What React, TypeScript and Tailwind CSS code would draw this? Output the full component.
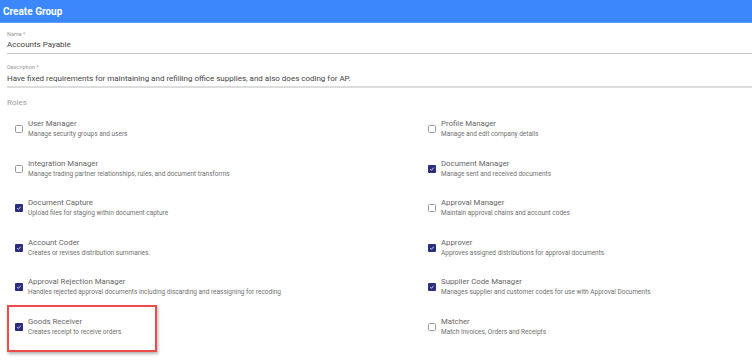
import React from 'react'

type Role = { title: string; desc: string; checked: boolean; mark?: boolean }

const roles: Role[] = [
  { title: 'User Manager', desc: 'Manage security groups and users', checked: false },
  { title: 'Profile Manager', desc: 'Manage and edit company details', checked: false },
  { title: 'Integration Manager', desc: 'Manage trading partner relationships, rules, and document transforms', checked: false },
  { title: 'Document Manager', desc: 'Manage sent and received documents', checked: true },
  { title: 'Document Capture', desc: 'Upload files for staging within document capture', checked: true },
  { title: 'Approval Manager', desc: 'Maintain approval chains and account codes', checked: false },
  { title: 'Account Coder', desc: 'Creates or revises distribution summaries.', checked: true },
  { title: 'Approver', desc: 'Approves assigned distributions for approval documents', checked: true },
  { title: 'Approval Rejection Manager', desc: 'Handles rejected approval documents including discarding and reassigning for recoding', checked: true },
  { title: 'Supplier Code Manager', desc: 'Manages supplier and customer codes for use with Approval Documents', checked: true },
  { title: 'Goods Receiver', desc: 'Creates receipt to receive orders', checked: true, mark: true },
  { title: 'Matcher', desc: 'Match Invoices, Orders and Receipts', checked: false },
]

const Checkbox = ({ checked }: { checked: boolean }) =>
  checked ? (
    <div className="mt-[6px] flex h-[8px] w-[8px] shrink-0 items-center justify-center rounded-[1px] bg-[#2d2d7f]">
      <svg width="6" height="6" viewBox="0 0 10 10">
        <path d="M2 5.2l2 2 4-4.4" fill="none" stroke="white" strokeWidth="1.3" />
      </svg>
    </div>
  ) : (
    <div className="mt-[6px] h-[8px] w-[8px] shrink-0 rounded-[1.5px] border border-[#9a9a9a]" />
  )

const RoleItem = ({ role }: { role: Role }) => (
  <div className="relative flex h-[39.5px] items-start gap-[5px]">
    <Checkbox checked={role.checked} />
    <div>
      <div className="text-[7.8px] leading-[10px] text-[#666]">{role.title}</div>
      <div className="mt-[1px] text-[6.5px] leading-[8px] text-[#707070]">{role.desc}</div>
    </div>
    {role.mark && (
      <div className="absolute left-[-8px] top-[-11.5px] h-[47px] w-[150px] border-2 border-[#f04a4a] shadow-[1px_2px_3px_rgba(0,0,0,0.3)]" />
    )}
  </div>
)

export default function App() {
  return (
    <div className="h-[361px] w-[752px] overflow-hidden bg-white font-['Roboto',sans-serif]">
      <div className="flex h-[23px] items-center border-b border-[#5c9dff] bg-[#3b88fd] pl-[3px]">
        <span className="text-[10px] font-bold text-white">Create Group</span>
      </div>
      <div className="pl-[7px]">
        <div className="border-b border-[#c8c8c8] pb-[2px] pt-[8px]">
          <div className="text-[5.5px] leading-[7px] text-[#999]">Name *</div>
          <div className="text-[8px] leading-[13px] text-[#444]">Accounts Payable</div>
        </div>
        <div className="border-b-2 border-[#dcdcdc] pb-[1px] pt-[10px]">
          <div className="text-[5.5px] leading-[7px] text-[#999]">Description *</div>
          <div className="mt-[1px] text-[8px] leading-[13px] text-[#444]">
            Have fixed requirements for maintaining and refilling office supplies, and also does coding for AP.
          </div>
        </div>
        <div className="mt-[9px] text-[8px] leading-[12px] text-[#9e9e9e]">Roles</div>
        <div className="mt-[10px] grid grid-cols-[413px_1fr] pl-[8px]">
          {roles.map((r) => (
            <RoleItem key={r.title} role={r} />
          ))}
        </div>
      </div>
    </div>
  )
}
